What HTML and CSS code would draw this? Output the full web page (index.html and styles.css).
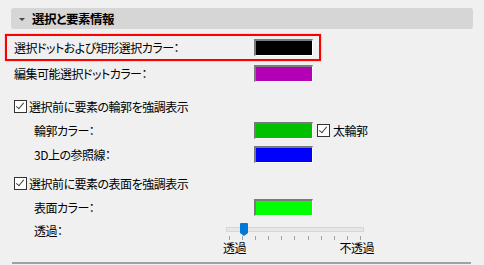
FILE: index.html
```html
<!DOCTYPE html>
<html lang="ja">
<head>
    <meta charset="UTF-8">
    <title>選択と要素情報</title>
    <link rel="stylesheet" href="styles.css">
</head>
<body>
    <div class="panel">
        <div class="section-header">
            <span class="caret"></span>
            <span>選択と要素情報</span>
        </div>

        <div class="row highlight">
            <span class="label">選択ドットおよび矩形選択カラー：</span>
            <span class="swatch" style="background:#000000"></span>
        </div>
        <div class="row">
            <span class="label">編集可能選択ドットカラー：</span>
            <span class="swatch" style="background:#b400b4"></span>
        </div>

        <label class="row check-row first">
            <span class="checkbox checked"></span>
            <span>選択前に要素の輪郭を強調表示</span>
        </label>
        <div class="row sub">
            <span class="label">輪郭カラー：</span>
            <span class="swatch" style="background:#00c000"></span>
            <label class="inline-check">
                <span class="checkbox checked"></span>
                <span>太輪郭</span>
            </label>
        </div>
        <div class="row sub">
            <span class="label">3D上の参照線：</span>
            <span class="swatch" style="background:#0000ff"></span>
        </div>

        <label class="row check-row">
            <span class="checkbox checked"></span>
            <span>選択前に要素の表面を強調表示</span>
        </label>
        <div class="row sub">
            <span class="label">表面カラー：</span>
            <span class="swatch" style="background:#00ff00"></span>
        </div>
        <div class="row sub slider-row">
            <span class="label short">透過：</span>
            <div class="slider">
                <div class="track">
                    <span class="thumb"></span>
                </div>
                <div class="ticks">
                    <i></i><i></i><i></i><i></i><i></i><i></i><i></i><i></i><i></i><i></i><i></i>
                </div>
                <div class="slider-labels">
                    <span>透過</span>
                    <span>不透過</span>
                </div>
            </div>
        </div>
        <div class="divider"></div>
    </div>
</body>
</html>
```

FILE: styles.css
```css
:root {
    --bg: #f0f0f0;
    --header-bg: #d6d6d6;
    --text: #000000;
    --accent: #0078d7;
}

body {
    margin: 0;
    background: var(--bg);
    color: var(--text);
    font-family: "Noto Sans CJK JP", "Noto Sans", sans-serif;
    font-size: 12px;
    font-feature-settings: "palt";
    letter-spacing: -0.5px;
    overflow: hidden;
}

.panel {
    padding-top: 8px;
}

.section-header {
    margin: 0 11px;
    height: 21px;
    border-radius: 3px;
    background: var(--header-bg);
    display: flex;
    align-items: center;
    font-weight: bold;
    font-size: 12.5px;
}

.caret {
    width: 0;
    height: 0;
    margin: 1px 7px 0 8px;
    border-left: 3px solid transparent;
    border-right: 3px solid transparent;
    border-top: 3px solid #444;
}

.row {
    display: flex;
    align-items: center;
    height: 24px;
    padding-left: 14px;
}

.label {
    width: 240px;
    flex: none;
    white-space: nowrap;
}

.highlight {
    margin: 5px 0 0 5px;
    width: 305px;
    height: 23px;
    padding-left: 7px;
    border: 2px solid #ff0000;
    box-shadow: 0 0 1px rgba(255, 0, 0, 0.6);
}

.sub {
    padding-left: 34px;
}

.sub .label {
    width: 220px;
}

.swatch {
    width: 56px;
    height: 14px;
    flex: none;
    border-style: solid;
    border-width: 2px 1px 1px 2px;
    border-color: #7a7a7a #ffffff #ffffff #7a7a7a;
}

.check-row {
    gap: 2px;
}

.check-row.first {
    margin-top: 9px;
}

.check-row:not(.first) {
    margin-top: 5px;
}

.checkbox {
    position: relative;
    width: 11px;
    height: 11px;
    flex: none;
    border: 1px solid #333;
    background: #fff;
}

.checkbox.checked::after {
    content: "";
    position: absolute;
    left: 3px;
    top: 0;
    width: 3px;
    height: 7px;
    border: solid #444;
    border-width: 0 1px 1px 0;
    transform: rotate(40deg);
}

.inline-check {
    display: flex;
    align-items: center;
    gap: 3px;
    margin-left: 4px;
}

.slider-row {
    align-items: flex-start;
    height: auto;
}

.slider-row .label.short {
    width: 192px;
    line-height: 24px;
}

.slider {
    padding-top: 4px;
    width: 138px;
}

.track {
    position: relative;
    height: 5px;
    margin: 4px 0;
    background: #e7e7e7;
    border: 1px solid #d6d6d6;
    box-sizing: border-box;
}

.thumb {
    position: absolute;
    left: 13px;
    top: -5px;
    width: 8px;
    height: 10px;
    background: var(--accent);
    border-radius: 1px 1px 0 0;
}

.thumb::after {
    content: "";
    position: absolute;
    left: 0;
    top: 10px;
    border-left: 4px solid transparent;
    border-right: 4px solid transparent;
    border-top: 3px solid var(--accent);
}

.ticks {
    display: flex;
    justify-content: space-between;
    margin: 2px 3px 0 3px;
    height: 4px;
}

.ticks i {
    width: 1px;
    height: 4px;
    background: #a0a0a0;
}

.slider-labels {
    display: flex;
    justify-content: space-between;
    width: 151px;
    margin-left: -3px;
    margin-top: 1px;
    line-height: 13px;
}

.divider {
    margin: 8px 13px 0 12px;
    border-top: 2px solid #a0a0a0;
}
```
